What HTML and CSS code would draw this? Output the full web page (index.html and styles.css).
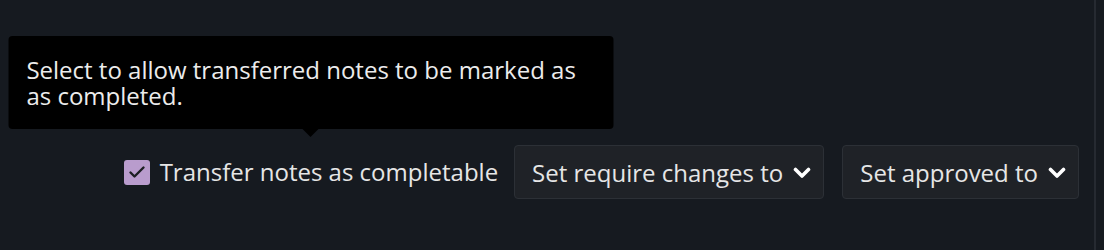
FILE: index.html
```html
<!DOCTYPE html>
<html>
<head>
<meta charset="utf-8">
<link rel="stylesheet" href="styles.css">
</head>
<body>
<div class="page">
  <div class="content">
    <div class="toolbar">
      <label class="check">
        <span class="tooltip">Select to allow transferred notes to be marked as as completed.</span>
        <span class="box">
          <svg width="18" height="14" viewBox="0 0 18 14"><path d="M2.5 7.5 L6.5 11.5 L15.5 2.5" fill="none" stroke="#1d1f24" stroke-width="2.4" stroke-linecap="round" stroke-linejoin="round"/></svg>
        </span>
        <span class="check-label">Transfer notes as completable</span>
      </label>
      <button class="drop drop-require">Set require changes to
        <svg class="chev" width="18" height="12" viewBox="0 0 18 12"><path d="M2.5 2.5 L9 9 L15.5 2.5" fill="none" stroke="#fff" stroke-width="3.6" stroke-linecap="round" stroke-linejoin="round"/></svg>
      </button>
      <button class="drop drop-approved">Set approved to
        <svg class="chev" width="18" height="12" viewBox="0 0 18 12"><path d="M2.5 2.5 L9 9 L15.5 2.5" fill="none" stroke="#fff" stroke-width="3.6" stroke-linecap="round" stroke-linejoin="round"/></svg>
      </button>
    </div>
  </div>
  <div class="divider"></div>
</div>
</body>
</html>
```

FILE: styles.css
```css
html, body {
  margin: 0;
  padding: 0;
  background: #161a20;
  font-family: "Open Sans", "Noto Sans", sans-serif;
}
.page {
  display: flex;
  width: 1104px;
  height: 250px;
}
.content {
  flex: 1;
  display: flex;
  justify-content: flex-end;
  padding-top: 145px;
  padding-right: 15px;
}
.divider {
  width: 2px;
  background: #262a31;
  margin-right: 8px;
}
.toolbar {
  display: flex;
  align-items: center;
  height: 54px;
}
.check {
  position: relative;
  display: flex;
  align-items: center;
  gap: 10px;
  margin-right: 16px;
  color: #e6e6e6;
  font-size: 24px;
  line-height: 32px;
}
.box {
  width: 26px;
  height: 25px;
  border-radius: 3px;
  background: #b99ccd;
  display: flex;
  align-items: center;
  justify-content: center;
}
.tooltip {
  position: absolute;
  left: 50%;
  bottom: 59px;
  transform: translateX(-50%);
  width: 605px;
  box-sizing: border-box;
  background: #000;
  color: #ececec;
  font-size: 24px;
  line-height: 26px;
  padding: 21px 18px 20px 18px;
  border-radius: 4px;
}
.tooltip::after {
  content: "";
  position: absolute;
  left: 50%;
  top: 100%;
  transform: translateX(-50%);
  border-left: 8px solid transparent;
  border-right: 8px solid transparent;
  border-top: 8px solid #000;
}
.drop {
  display: flex;
  align-items: center;
  gap: 10px;
  height: 54px;
  box-sizing: border-box;
  padding: 0 12px 0 17px;
  background: #1f2227;
  border: 1px solid #2c3036;
  border-radius: 4px;
  color: #e6e6e6;
  font-family: "Open Sans", "Noto Sans", sans-serif;
  font-size: 24px;
}
.drop-require {
  margin-right: 18px;
}
.chev {
  margin-top: 1px;
}
```
